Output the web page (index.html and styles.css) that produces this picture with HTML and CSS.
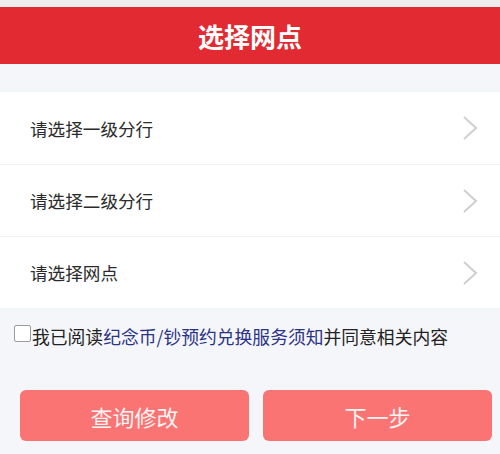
FILE: index.html
```html
<!DOCTYPE html>
<html lang="zh-CN">
<head>
<meta charset="utf-8">
<title>选择网点</title>
<link rel="stylesheet" href="styles.css">
</head>
<body>
<div class="status"></div>
<header class="header">选择网点</header>
<ul class="list">
  <li class="row"><span>请选择一级分行</span>
    <svg class="chev" viewBox="0 0 16 26" width="16" height="26"><path d="M2 2 L14 13 L2 24" fill="none" stroke="#cfcfcf" stroke-width="2"/></svg></li>
  <li class="row"><span>请选择二级分行</span>
    <svg class="chev" viewBox="0 0 16 26" width="16" height="26"><path d="M2 2 L14 13 L2 24" fill="none" stroke="#cfcfcf" stroke-width="2"/></svg></li>
  <li class="row"><span>请选择网点</span>
    <svg class="chev" viewBox="0 0 16 26" width="16" height="26"><path d="M2 2 L14 13 L2 24" fill="none" stroke="#cfcfcf" stroke-width="2"/></svg></li>
</ul>
<div class="agree">
  <span class="box"></span>
  <span class="agree-text">我已阅读<span class="link">纪念币/钞预约兑换服务须知</span>并同意相关内容</span>
</div>
<div class="buttons">
  <button class="btn">查询修改</button>
  <button class="btn">下一步</button>
</div>
</body>
</html>
```
FILE: styles.css
```css
html, body {
  margin: 0;
  padding: 0;
}
body {
  background: #f5f6f9;
  font-family: "Noto Sans CJK SC", "Noto Sans", sans-serif;
  width: 500px;
  height: 454px;
  overflow: hidden;
}
.status {
  height: 7px;
  background: #ededed;
}
.header {
  height: 57px;
  background: #e12a31;
  color: #fff;
  font-size: 26px;
  font-weight: bold;
  display: flex;
  align-items: center;
  justify-content: center;
  letter-spacing: 0;
}
.list {
  list-style: none;
  margin: 28px 0 0 0;
  padding: 0;
  background: #fff;
}
.row {
  height: 72px;
  display: flex;
  align-items: center;
  justify-content: space-between;
  padding: 0 22px 0 30px;
  font-size: 17.6px;
  color: #2b2b2b;
  box-sizing: border-box;
  border-top: 1px solid #f3f3f3;
}
.row:first-child {
  border-top: none;
}
.chev {
  display: block;
}
.agree {
  display: flex;
  align-items: center;
  margin-top: 16px;
  padding-left: 14px;
  height: 18px;
}
.box {
  width: 15px;
  height: 15px;
  border: 1.5px solid #9c9c9c;
  border-radius: 2px;
  background: #fff;
  flex: none;
}
.agree-text {
  font-size: 17.8px;
  color: #222;
  margin-left: 1px;
  white-space: nowrap;
  line-height: 18px;
  padding-top: 6px;
}
.link {
  color: #2c3286;
}
.buttons {
  display: flex;
  gap: 14px;
  margin-top: 48px;
  padding: 0 8px 0 20px;
}
.btn {
  flex: 1;
  height: 51px;
  border: none;
  border-radius: 6px;
  background: #fb7474;
  color: #fff3f3;
  font-family: "Noto Sans CJK SC", "Noto Sans", sans-serif;
  font-size: 22px;
  padding: 0;
}
```
